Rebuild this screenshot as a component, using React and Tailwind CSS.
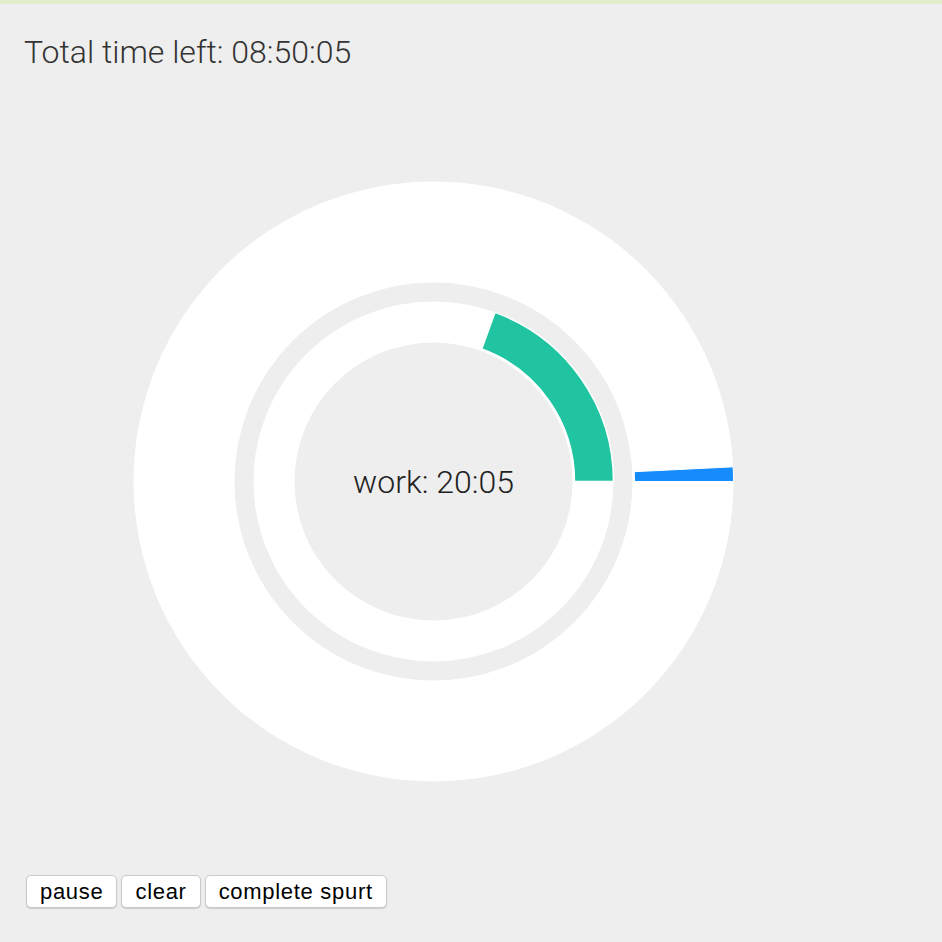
import React from 'react';

const C = 301.5;

function arcPath(r0, r1, a0, a1) {
  // angles in degrees, clockwise from 12 o'clock
  const rad = (a) => ((a - 90) * Math.PI) / 180;
  const p = (r, a) => [C + r * Math.cos(rad(a)), C + r * Math.sin(rad(a))];
  const large = a1 - a0 > 180 ? 1 : 0;
  const [x0, y0] = p(r1, a0);
  const [x1, y1] = p(r1, a1);
  const [x2, y2] = p(r0, a1);
  const [x3, y3] = p(r0, a0);
  return `M${x0} ${y0}A${r1} ${r1} 0 ${large} 1 ${x1} ${y1}L${x2} ${y2}A${r0} ${r0} 0 ${large} 0 ${x3} ${y3}Z`;
}

export default function App() {
  const buttons = ['pause', 'clear', 'complete spurt'];

  return (
    <div className="min-h-[942px] bg-[#eeeeee] flex flex-col" style={{ fontFamily: 'Roboto, sans-serif' }}>
      <div className="h-[4px] bg-[#dfedcb]" />
      <h1 className="pl-[24px] pt-[28px] text-[32px] leading-[40px] font-light text-[#333333]">
        Total time left: 08:50:05
      </h1>
      <div className="mt-[108px] ml-[132px] relative w-[603px] h-[603px]">
        <svg width="603" height="603" viewBox="0 0 603 603" className="block">
          <circle cx={C} cy={C} r="300" fill="#ffffff" />
          <circle cx={C} cy={C} r="189.5" fill="none" stroke="#eeeeee" strokeWidth="19" />
          <circle cx={C} cy={C} r="139" fill="#eeeeee" />
          <path d={arcPath(141, 180, 20, 90)} fill="#20c4a1" stroke="#ffffff" strokeWidth="1.5" />
          <path d={arcPath(201, 300, 87.2, 90)} fill="#168bfc" stroke="#ffffff" strokeWidth="1" />
        </svg>
        <div className="absolute inset-0 flex items-center justify-center">
          <span className="text-[32px] font-light text-[#222222]">work: 20:05</span>
        </div>
      </div>
      <div className="mt-[92px] pl-[26px] flex gap-[4px]">
        {buttons.map((b) => (
          <button
            key={b}
            className="h-[33px] px-[13px] bg-white border border-[#c9c9c9] rounded-[5px] shadow-[0_1px_1px_rgba(0,0,0,0.15)] text-[22px] tracking-[0.7px] leading-none text-black"
            style={{ fontFamily: '"Liberation Sans", Arial, sans-serif' }}
          >
            {b}
          </button>
        ))}
      </div>
    </div>
  );
}
